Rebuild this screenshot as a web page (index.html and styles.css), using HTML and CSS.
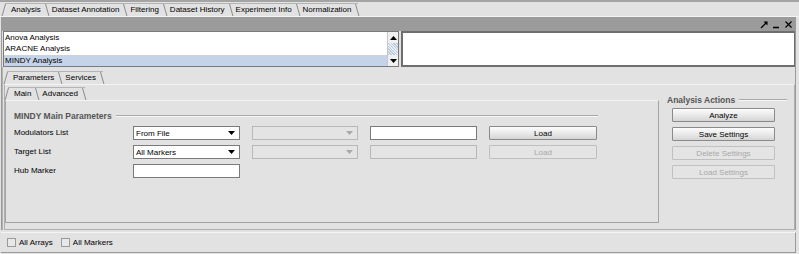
FILE: index.html
```html
<!DOCTYPE html>
<html lang="en">
<head>
  <meta charset="UTF-8" />
  <title>Analysis - MINDY</title>
  <link rel="stylesheet" href="styles.css">
</head>
<body>
  <div class="app">
    <div class="tabs top-tabs">
      <span class="tab first">Analysis</span>
      <span class="tab">Dataset Annotation</span>
      <span class="tab">Filtering</span>
      <span class="tab">Dataset History</span>
      <span class="tab">Experiment Info</span>
      <span class="tab">Normalization</span>
    </div>

    <div class="window">
      <div class="titlebar">
        <svg class="win-icon" width="9" height="9" viewBox="0 0 9 9">
          <path d="M1 8 L7 2" stroke="#000" stroke-width="1.3" fill="none"/>
          <path d="M3.5 1.5 H7.5 V5.5 Z" fill="#000"/>
        </svg>
        <svg class="win-icon" width="9" height="9" viewBox="0 0 9 9">
          <path d="M1 7.5 H7" stroke="#000" stroke-width="1.5"/>
        </svg>
        <svg class="win-icon" width="9" height="9" viewBox="0 0 9 9">
          <path d="M1.5 1.5 L7.5 7.5 M7.5 1.5 L1.5 7.5" stroke="#000" stroke-width="1.2"/>
        </svg>
      </div>

      <div class="lists">
        <div class="listbox">
          <ul class="items">
            <li>Anova Analysis</li>
            <li>ARACNE Analysis</li>
            <li class="selected">MINDY Analysis</li>
          </ul>
          <div class="scrollbar">
            <span class="sb-btn"><svg width="7" height="4" viewBox="0 0 7 4"><path d="M0 4 L3.5 0 L7 4 Z" fill="#000"/></svg></span>
            <span class="sb-thumb"></span>
            <span class="sb-btn"><svg width="7" height="4" viewBox="0 0 7 4"><path d="M0 0 L7 0 L3.5 4 Z" fill="#000"/></svg></span>
          </div>
        </div>
        <div class="detail"></div>
      </div>

      <div class="panel">
        <div class="tabs sub-tabs">
          <span class="tab first">Parameters</span>
          <span class="tab">Services</span>
        </div>
        <div class="panel-body">
          <div class="main-pane">
            <div class="tabs sub-tabs">
              <span class="tab first">Main</span>
              <span class="tab">Advanced</span>
            </div>
            <div class="main-body">
              <div class="group-title"><span>MINDY Main Parameters</span><i class="rule"></i></div>
              <div class="param-grid">
                <label>Modulators List</label>
                <div class="combo"><span>From File</span><svg width="7" height="4" viewBox="0 0 7 4"><path d="M0 0 L7 0 L3.5 4 Z" fill="#000"/></svg></div>
                <div class="combo disabled"><span></span><svg width="7" height="4" viewBox="0 0 7 4"><path d="M0 0 L7 0 L3.5 4 Z" fill="#a8a8a8"/></svg></div>
                <div class="field"></div>
                <button class="btn">Load</button>

                <label>Target List</label>
                <div class="combo"><span>All Markers</span><svg width="7" height="4" viewBox="0 0 7 4"><path d="M0 0 L7 0 L3.5 4 Z" fill="#000"/></svg></div>
                <div class="combo disabled"><span></span><svg width="7" height="4" viewBox="0 0 7 4"><path d="M0 0 L7 0 L3.5 4 Z" fill="#a8a8a8"/></svg></div>
                <div class="field disabled"></div>
                <button class="btn" disabled>Load</button>

                <label>Hub Marker</label>
                <div class="field"></div>
              </div>
            </div>
          </div>

          <div class="actions">
            <div class="group-title"><span>Analysis Actions</span><i class="rule"></i></div>
            <div class="action-list">
              <button class="btn">Analyze</button>
              <button class="btn">Save Settings</button>
              <button class="btn" disabled>Delete Settings</button>
              <button class="btn" disabled>Load Settings</button>
            </div>
          </div>
        </div>
      </div>
    </div>

    <div class="statusbar">
      <label class="check"><span class="box"></span>All Arrays</label>
      <label class="check"><span class="box"></span>All Markers</label>
    </div>
  </div>
</body>
</html>
```

FILE: styles.css
```css
body {
  margin: 0;
  padding: 0;
  background-color: #e2e2e2;
  font-family: "Liberation Sans", Arial, sans-serif;
  font-size: 8px;
  color: #000;
}

.app {
  width: 799px;
  height: 254px;
  box-sizing: border-box;
  border-top: 2px solid #a4a4a4;
  display: flex;
  flex-direction: column;
}

/* tabs */
.tabs {
  display: flex;
  align-items: flex-end;
}

.top-tabs {
  height: 14px;
  padding-left: 5px;
  border-bottom: 1px solid #f4f4f4;
}

.tab {
  position: relative;
  height: 12px;
  line-height: 12px;
  padding: 0 7px 0 4px;
  border-top: 1px solid #b4b4b4;
  white-space: nowrap;
}

.tab::after {
  content: "";
  position: absolute;
  right: 2px;
  top: 0;
  bottom: 0;
  width: 1px;
  background-color: #8c8c8c;
  transform: skewX(16deg);
  transform-origin: top;
}

.tab.first::before {
  content: "";
  position: absolute;
  left: 0;
  top: 0;
  bottom: 0;
  width: 1px;
  background-color: #8c8c8c;
  transform: skewX(-16deg);
  transform-origin: top;
}

.tab.first {
  padding-left: 6px;
}

/* docked window */
.window {
  margin: 0 3px 0 1px;
  border-left: 1px solid #9a9a9a;
  border-right: 1px solid #9a9a9a;
  display: flex;
  flex-direction: column;
}

.titlebar {
  height: 14px;
  background-color: #9b9b9b;
  display: flex;
  justify-content: flex-end;
  align-items: center;
  gap: 3px;
  padding-right: 2px;
}

.lists {
  display: flex;
  gap: 2px;
  height: 36px;
  padding: 0 0 0 1px;
}

.listbox {
  width: 394px;
  border: 1px solid #7a7a7a;
  background-color: #fff;
  display: flex;
}

.items {
  list-style: none;
  margin: 0;
  padding: 0;
  flex: 1;
}

.items li {
  height: 11.3px;
  line-height: 11.3px;
  padding-left: 1px;
}

.items li.selected {
  background-color: #c4d3e8;
}

.scrollbar {
  width: 10px;
  border-left: 1px solid #c8c8c8;
  display: flex;
  flex-direction: column;
}

.sb-btn {
  height: 11px;
  background-color: #f0f0f0;
  display: flex;
  align-items: center;
  justify-content: center;
}

.sb-thumb {
  flex: 1;
  background-color: #d6e0ec;
  background-image: repeating-linear-gradient(45deg, #bccbdc 0 1px, #e8eef5 1px 2px);
}

.detail {
  flex: 1;
  border: 2px solid #6e6e6e;
  border-right-width: 1px;
  background-color: #fff;
}

/* parameters panel */
.panel {
  padding: 3px 0 0 1px;
  border-left: 1px solid #b0b0b0;
  display: flex;
  flex-direction: column;
}

.sub-tabs {
  height: 14px;
  padding-left: 3px;
}

.panel-body {
  height: 144px;
  border: 1px solid #b0b0b0;
  border-top-color: #f4f4f4;
  display: flex;
  gap: 8px;
}

.main-pane {
  width: 654px;
  display: flex;
  flex-direction: column;
  padding-top: 1px;
}

.main-body {
  height: 112px;
  border: 1px solid #a4a4a4;
  border-top-color: #f4f4f4;
  border-left-color: #a4a4a4;
  padding: 9px 0 0 8px;
}

.group-title {
  display: flex;
  align-items: center;
  gap: 4px;
  height: 12px;
  font-size: 8.5px;
  font-weight: bold;
  color: #555;
}

.group-title .rule {
  flex: 1;
  height: 0;
  border-top: 1px solid #a8a8a8;
  border-bottom: 1px solid #f8f8f8;
}

.main-body .group-title {
  width: 584px;
}

.param-grid {
  display: grid;
  grid-template-columns: 107px 107px 106px 107px 108px;
  grid-auto-rows: 14px;
  column-gap: 12px;
  row-gap: 5px;
  margin-top: 4px;
}

.param-grid label {
  line-height: 14px;
}

.combo {
  box-sizing: border-box;
  border: 1px solid #7a7a7a;
  background-color: #fff;
  display: flex;
  align-items: center;
  justify-content: space-between;
  padding: 0 4px 0 2px;
}

.combo.disabled {
  background-color: #e4e4e4;
  border-color: #b8b8b8;
}

.field {
  box-sizing: border-box;
  border: 1px solid #7a7a7a;
  background-color: #fff;
}

.field.disabled {
  background-color: #e4e4e4;
  border-color: #b8b8b8;
}

.btn {
  box-sizing: border-box;
  height: 14px;
  margin: 0;
  padding: 0;
  font-family: inherit;
  font-size: 8px;
  color: #000;
  border: 1px solid #8a8a8a;
  border-radius: 1px;
  background: linear-gradient(#fcfcfc, #e6e6e6 60%, #d4d4d4);
}

.btn:disabled {
  color: #a8a8a8;
  border-color: #c0c0c0;
  background: #e4e4e4;
}

/* right side actions */
.actions {
  width: 120px;
  padding-top: 9px;
}

.action-list {
  display: flex;
  flex-direction: column;
  gap: 5px;
  padding: 2px 0 0 5px;
  width: 103px;
}

/* bottom bar */
.statusbar {
  margin: 2px 3px 0 1px;
  height: 19px;
  border-top: 1px solid #f4f4f4;
  border-bottom: 1px solid #9a9a9a;
  border-right: 1px solid #9a9a9a;
  display: flex;
  align-items: center;
  gap: 8px;
  padding-left: 6px;
}

.check {
  display: flex;
  align-items: center;
  gap: 3px;
}

.check .box {
  width: 7px;
  height: 7px;
  border: 1px solid #9a9a9a;
  background-color: #e8e8e8;
}
```
